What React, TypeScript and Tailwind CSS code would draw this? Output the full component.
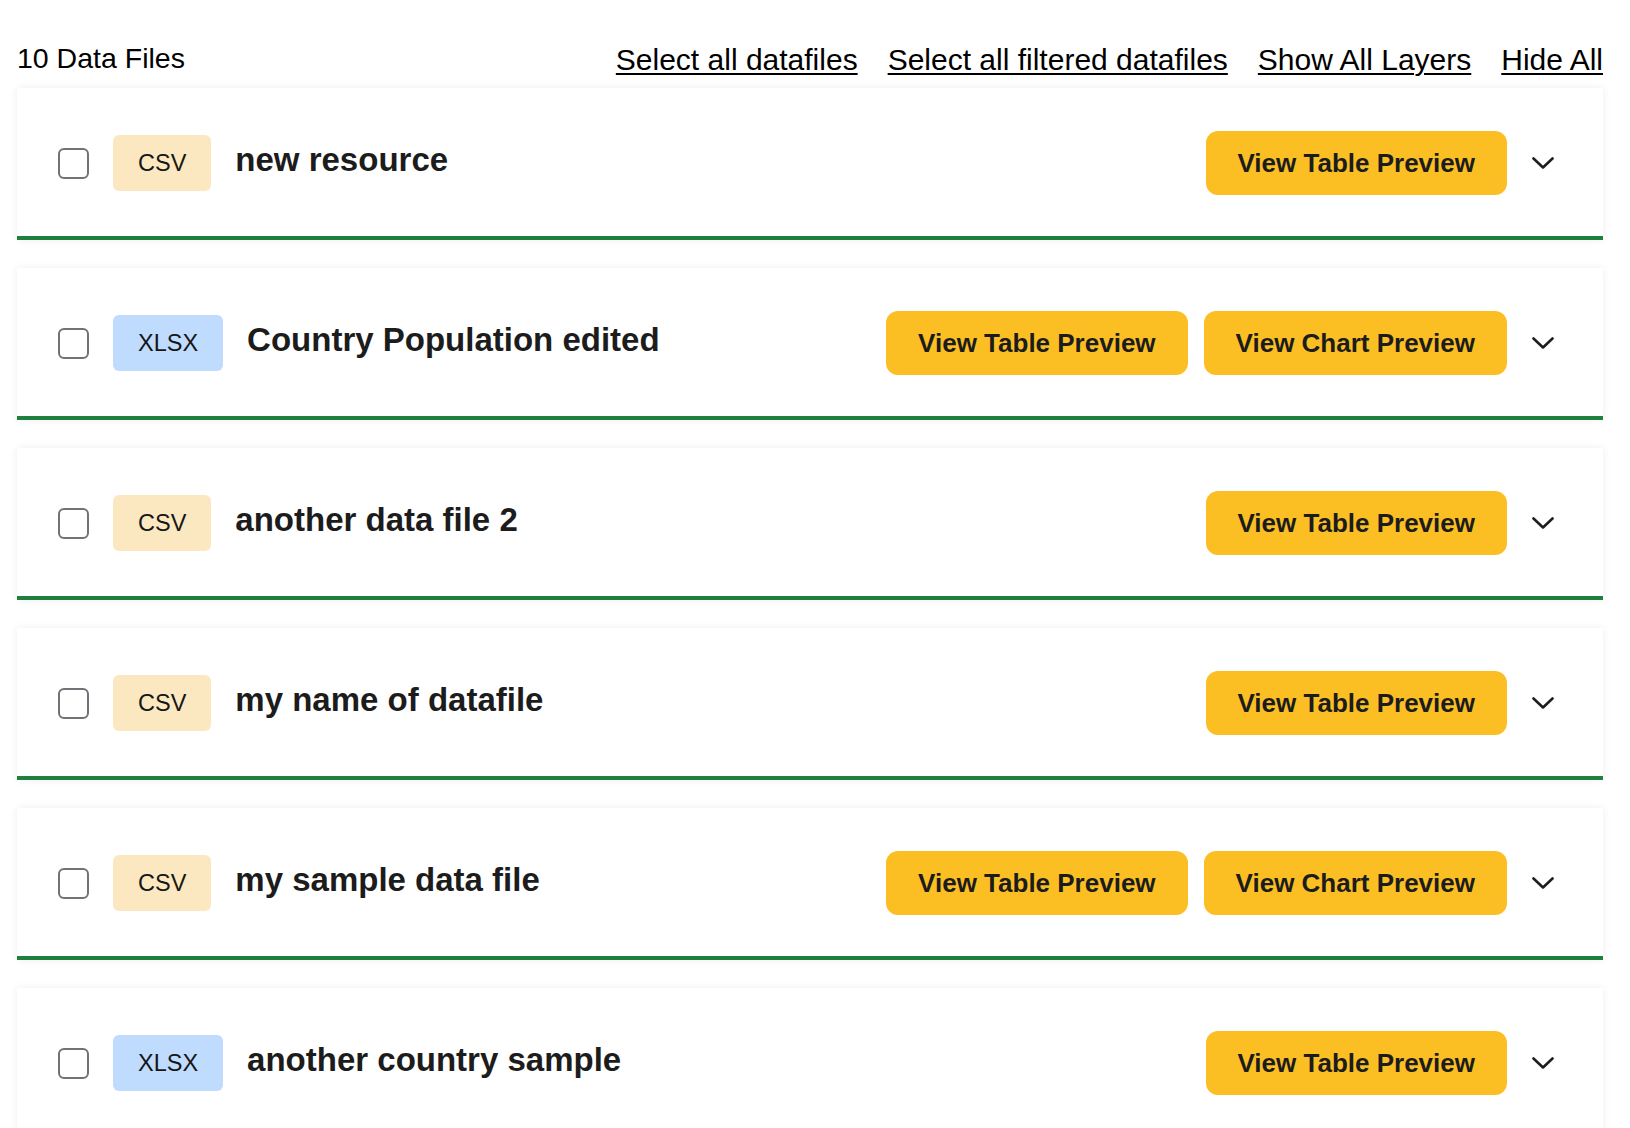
import { useState } from "react";

type DataFile = {
  name: string;
  format: "CSV" | "XLSX";
  chart?: boolean;
};

const files: DataFile[] = [
  { name: "new resource", format: "CSV" },
  { name: "Country Population edited", format: "XLSX", chart: true },
  { name: "another data file 2", format: "CSV" },
  { name: "my name of datafile", format: "CSV" },
  { name: "my sample data file", format: "CSV", chart: true },
  { name: "another country sample", format: "XLSX" },
];

function Chevron() {
  return (
    <svg width="22" height="12" viewBox="0 0 22 12" fill="none" aria-hidden>
      <path
        d="M1.5 1.5 11 10.5l9.5-9"
        stroke="#1f1f1f"
        strokeWidth="2.6"
        strokeLinecap="round"
        strokeLinejoin="round"
      />
    </svg>
  );
}

function FileCard({ file }: { file: DataFile }) {
  const [checked, setChecked] = useState(false);
  const badge = file.format === "CSV" ? "bg-[#fbe8c1]" : "bg-[#bfdbfe]";

  return (
    <div className="flex items-center justify-between border-b-4 border-[#1f7f3f] bg-white pb-[41px] pl-[41px] pr-10 pt-[43px] shadow-[0_0_8px_rgba(0,0,0,0.07)]">
      <div className="flex items-center gap-6">
        <input
          type="checkbox"
          checked={checked}
          onChange={(e) => setChecked(e.target.checked)}
          className="h-[31px] w-[31px] cursor-pointer appearance-none rounded-md border-2 border-[#6f7276] bg-white checked:bg-[#1f7f3f]"
        />
        <span className={`rounded-md px-[25px] py-3 text-[23.5px] leading-8 text-[#161616] ${badge}`}>
          {file.format}
        </span>
        <h3 className="mb-[6px] text-[33px] font-bold leading-10 text-[#1c1c1c]">{file.name}</h3>
      </div>

      <div className="flex items-center gap-4">
        <button
          type="button"
          className="rounded-xl bg-[#fbbf24] px-8 py-4 text-[26px] font-bold leading-8 text-[#1c1c1c]"
        >
          View Table Preview
        </button>
        {file.chart ? (
          <button
            type="button"
            className="rounded-xl bg-[#fbbf24] px-8 py-4 text-[26px] font-bold leading-8 text-[#1c1c1c]"
          >
            View Chart Preview
          </button>
        ) : null}
        <button type="button" aria-label="Expand" className="flex h-10 w-10 items-center justify-center">
          <Chevron />
        </button>
      </div>
    </div>
  );
}

export default function App() {
  return (
    <div className="min-h-screen bg-white pl-[17px] pr-[27px] pt-10 font-['Liberation_Sans',Arial,sans-serif]">
      <div className="flex items-baseline justify-between">
        <h2 className="text-[28.5px] leading-9 text-black">10 Data Files</h2>
        <div className="flex translate-y-[2px] items-baseline gap-[30px] text-[30px] leading-9 text-black">
          <a href="#" className="underline decoration-2 underline-offset-[3px]">Select all datafiles</a>
          <a href="#" className="underline decoration-2 underline-offset-[3px]">Select all filtered datafiles</a>
          <a href="#" className="underline decoration-2 underline-offset-[3px]">Show All Layers</a>
          <a href="#" className="underline decoration-2 underline-offset-[3px]">Hide All</a>
        </div>
      </div>

      <div className="mt-3 flex flex-col gap-7">
        {files.map((f) => (
          <FileCard key={f.name} file={f} />
        ))}
      </div>
    </div>
  );
}
